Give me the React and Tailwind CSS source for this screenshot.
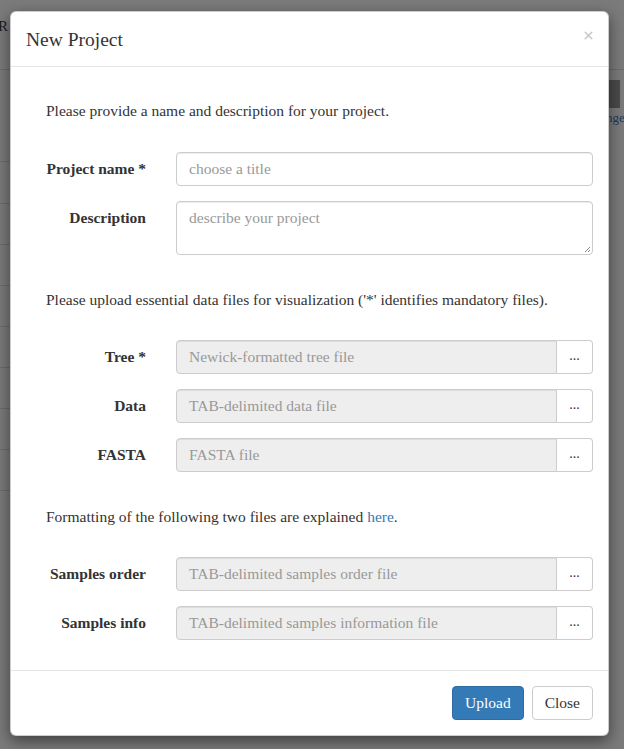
import { X } from 'lucide-react';

const serif = { fontFamily: '"Liberation Serif", "Times New Roman", serif' };

const FileRow = ({ label, placeholder, className = '' }) => (
    <div className={`flex items-start ${className}`}>
        <label className="w-[100px] shrink-0 text-right pt-[7px] leading-5 font-bold text-[#333] whitespace-nowrap">{label}</label>
        <div className="ml-[30px] flex-1 flex h-[34px]">
            <div className="flex-1 flex items-center px-3 bg-[#eeeeee] border border-[#cccccc] rounded-l-[4px] text-[#999999] shadow-[inset_0_1px_1px_rgba(0,0,0,0.075)]">
                {placeholder}
            </div>
            <button className="w-[36px] border border-l-0 border-[#cccccc] rounded-r-[4px] bg-white text-[#333] text-[14px] leading-none pb-[2px]">...</button>
        </div>
    </div>
);

const App = () => {
    return (
        <div className="relative w-[624px] h-[749px] overflow-hidden bg-[#7b7b7b] text-[15.5px]" style={serif}>
            {/* page behind the backdrop */}
            <div className="absolute inset-0 pointer-events-none">
                <div className="absolute left-[-2px] top-[15px] text-[15px] text-[#1a1a1a]">R I</div>
                <div className="absolute left-0 right-0 top-[69px] h-px bg-[#6c6c6c]" />
                {[161, 203, 244, 285, 326, 367, 408, 449, 490].map((y) => (
                    <div key={y} className="absolute left-0 w-[12px] h-px bg-[#6c6c6c]" style={{ top: y }} />
                ))}
                <div className="absolute left-[607px] top-[80px] w-[13px] h-[28px] bg-[#4a4a4a]" />
                <div className="absolute left-[606px] top-[108px] text-[13px] text-[#1d3b5a]">nge</div>
            </div>

            <div className="relative ml-[10px] mt-[11px] w-[599px] bg-white rounded-[6px] border border-black/20 shadow-[0_5px_15px_rgba(0,0,0,0.5)]">
                <div className="flex items-start justify-between h-[55px] pl-[15px] pr-[15px] border-b border-[#e5e5e5]">
                    <h4 className="mt-[15px] text-[19.5px] leading-[26px] text-[#333]">New Project</h4>
                    <button className="mt-[17px] mr-[-2px] text-[#c8c8c8]">
                        <X size={13} strokeWidth={3} />
                    </button>
                </div>

                <div className="pl-[35px] pr-[15px] pt-[34px] pb-[30px] text-[#333] leading-5">
                    <p>Please provide a name and description for your project.</p>

                    <div className="flex items-start mt-[31px]">
                        <label className="w-[100px] shrink-0 text-right pt-[7px] leading-5 font-bold whitespace-nowrap">Project name *</label>
                        <div className="ml-[30px] flex-1 h-[34px] flex items-center px-3 border border-[#cccccc] rounded-[4px] text-[#999999] shadow-[inset_0_1px_1px_rgba(0,0,0,0.075)]">
                            choose a title
                        </div>
                    </div>

                    <div className="flex items-start mt-[15px]">
                        <label className="w-[100px] shrink-0 text-right pt-[7px] leading-5 font-bold">Description</label>
                        <div className="relative ml-[30px] flex-1 h-[54px] px-3 pt-[6px] border border-[#cccccc] rounded-[4px] text-[#999999] shadow-[inset_0_1px_1px_rgba(0,0,0,0.075)]">
                            describe your project
                            <svg className="absolute right-[1px] bottom-[1px]" width="7" height="7" viewBox="0 0 7 7">
                                <path d="M6 1 L1 6 M6 4 L4 6" stroke="#888" strokeWidth="1" />
                            </svg>
                        </div>
                    </div>

                    <p className="mt-[35px]">Please upload essential data files for visualization ('*' identifies mandatory files).</p>

                    <FileRow className="mt-[30px]" label="Tree *" placeholder="Newick-formatted tree file" />
                    <FileRow className="mt-[15px]" label="Data" placeholder="TAB-delimited data file" />
                    <FileRow className="mt-[15px]" label="FASTA" placeholder="FASTA file" />

                    <p className="mt-[35px]">
                        Formatting of the following two files are explained <a className="text-[#337ab7]">here</a>.
                    </p>

                    <FileRow className="mt-[30px]" label="Samples order" placeholder="TAB-delimited samples order file" />
                    <FileRow className="mt-[15px]" label="Samples info" placeholder="TAB-delimited samples information file" />
                </div>

                <div className="flex justify-end gap-[8px] px-[15px] py-[15px] border-t border-[#e5e5e5]">
                    <button className="h-[34px] px-[12px] rounded-[4px] bg-[#337ab7] border border-[#2e6da4] text-white">Upload</button>
                    <button className="h-[34px] px-[12px] rounded-[4px] bg-white border border-[#cccccc] text-[#333]">Close</button>
                </div>
            </div>
        </div>
    );
};

export default App;
